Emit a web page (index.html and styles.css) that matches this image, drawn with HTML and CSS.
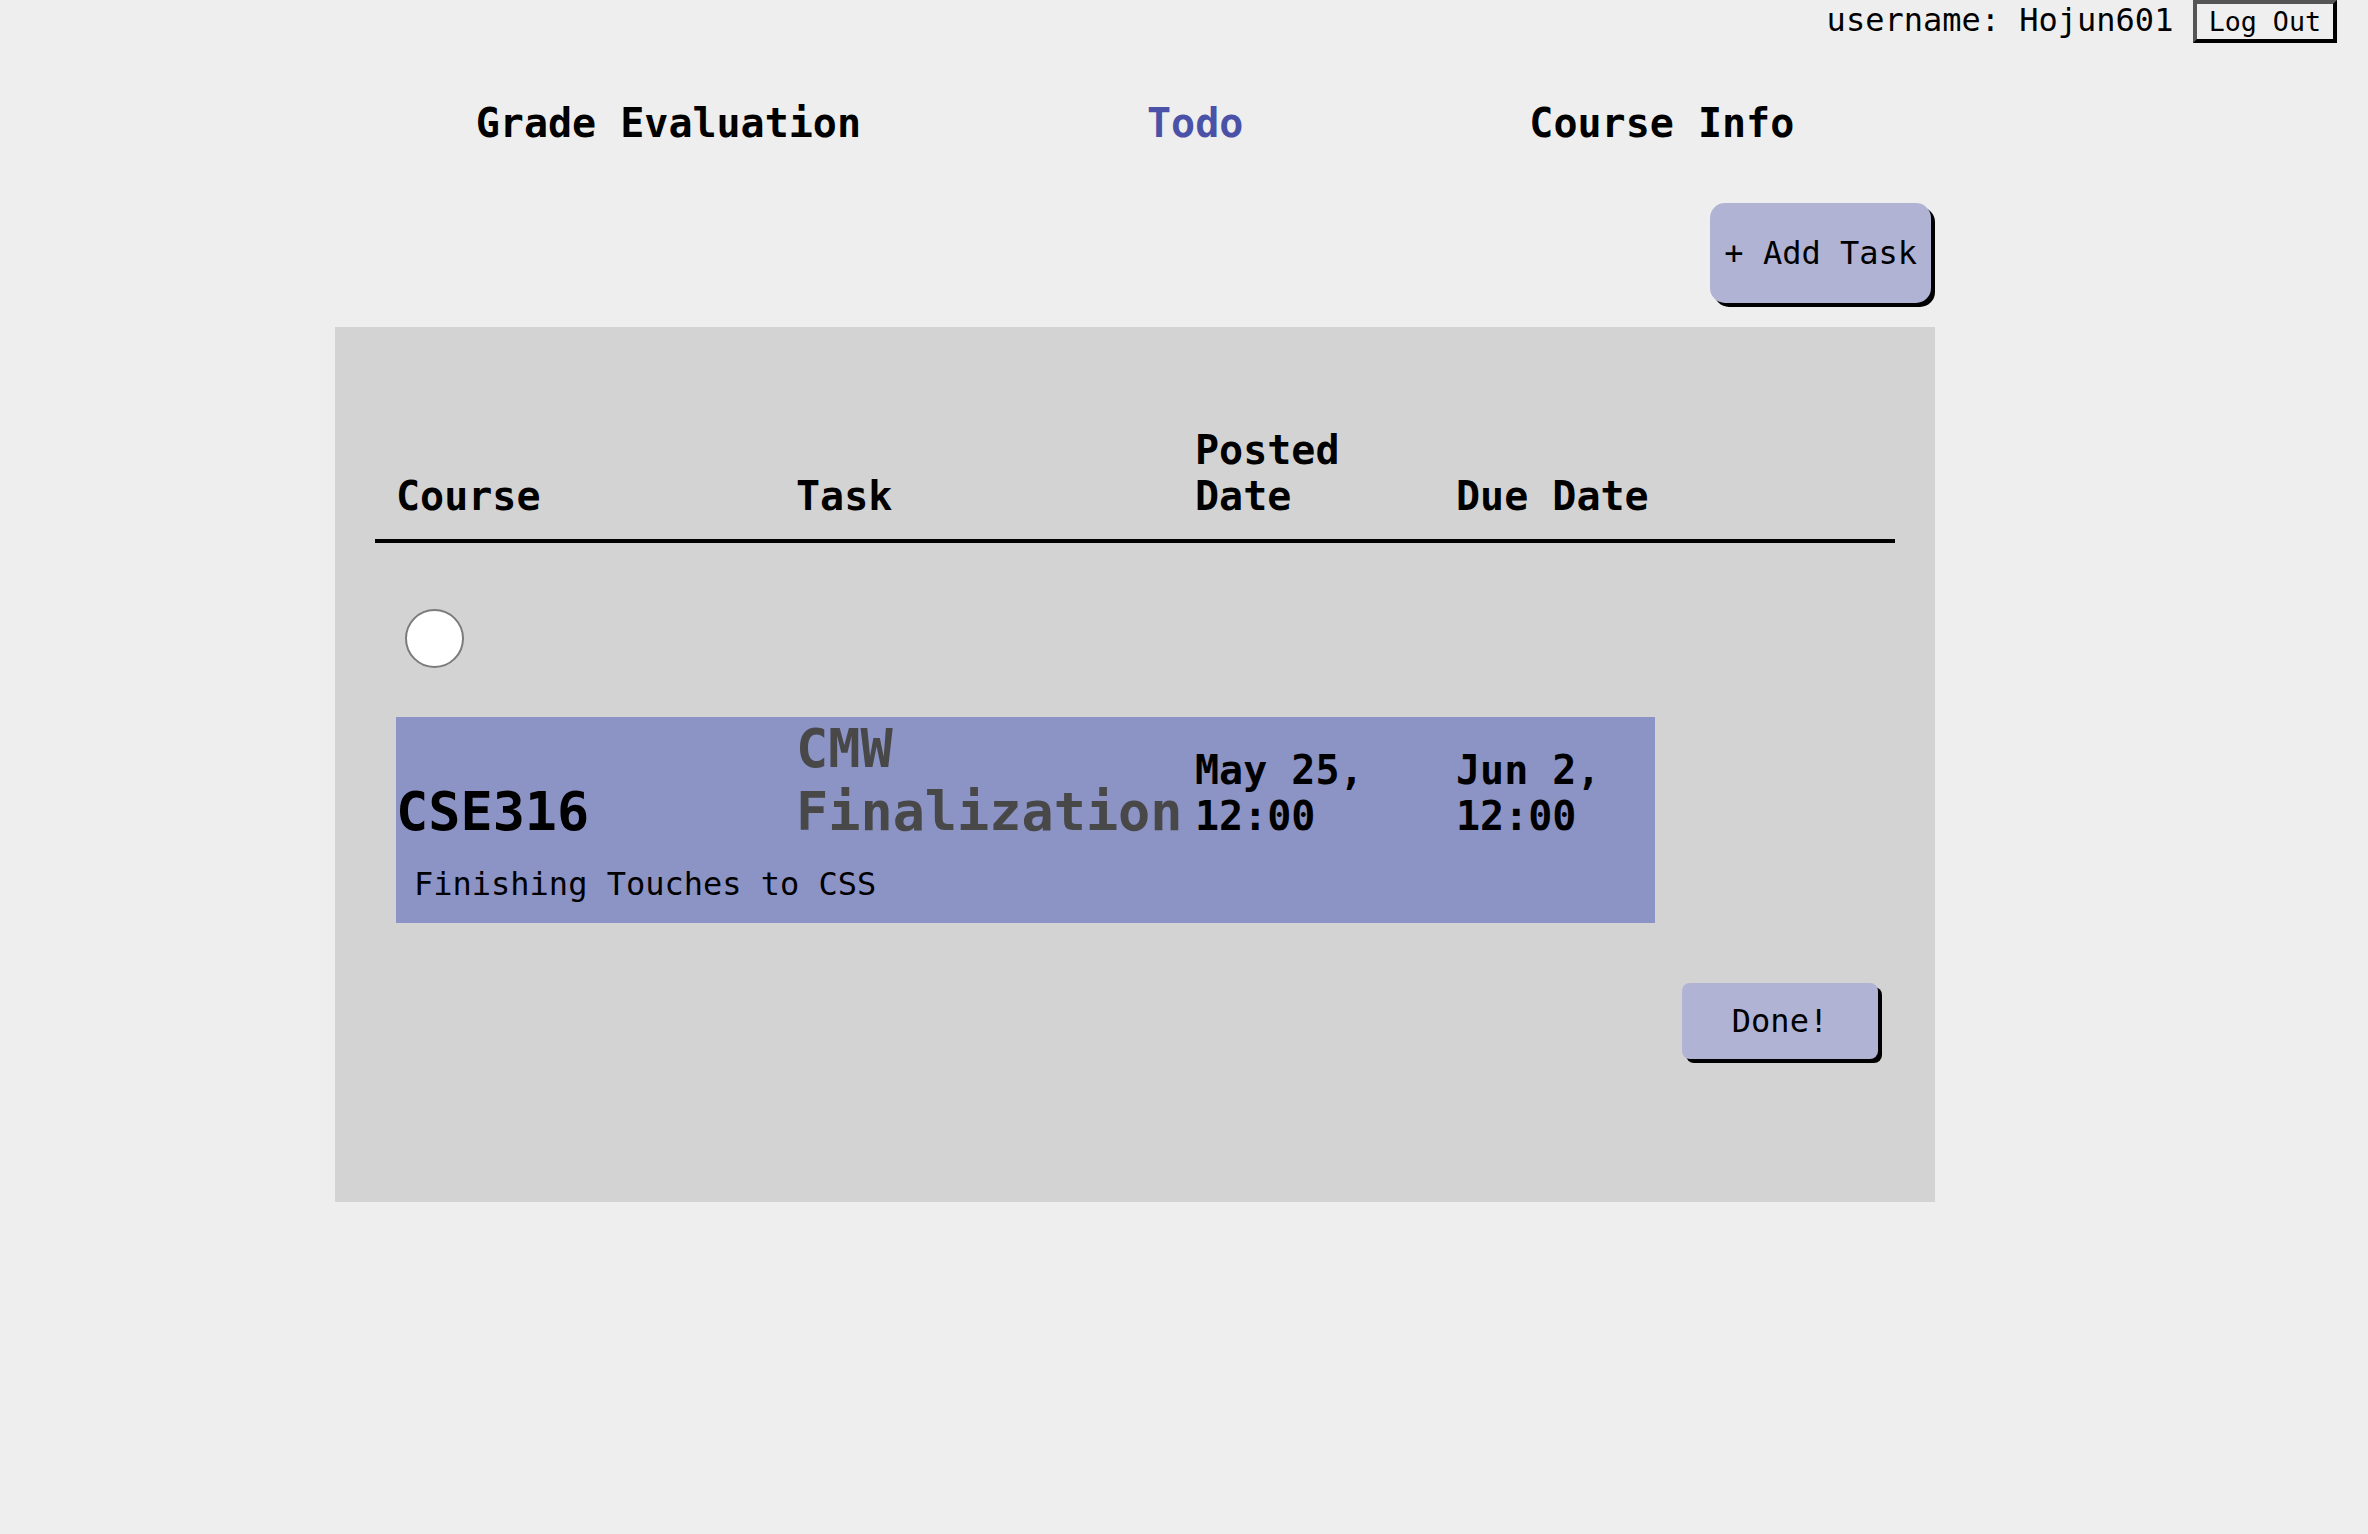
FILE: index.html
```html
<!DOCTYPE html>
<html lang="en">
<head>
<meta charset="utf-8">
<title>Todo</title>
<link rel="stylesheet" href="styles.css">
</head>
<body>
<header class="topbar"><span class="user">username: Hojun601</span> <button class="logout">Log Out</button></header>
<main class="page">
  <nav class="nav">
    <a class="nav-link">Grade Evaluation</a>
    <a class="nav-link active">Todo</a>
    <a class="nav-link">Course Info</a>
  </nav>
  <div class="toolbar"><button class="btn add">+ Add Task</button></div>
  <section class="panel">
    <div class="cols head">
      <div>Course</div>
      <div>Task</div>
      <div>Posted Date</div>
      <div>Due Date</div>
    </div>
    <div class="task">
      <input type="radio" class="check">
      <div class="card">
        <div class="cols row">
          <div class="course">CSE316</div>
          <div class="title">CMW Finalization</div>
          <div class="date">May 25, 12:00</div>
          <div class="date">Jun 2, 12:00</div>
        </div>
        <p class="desc">Finishing Touches to CSS</p>
      </div>
      <div class="actions"><button class="btn done">Done!</button></div>
    </div>
  </section>
</main>
</body>
</html>
```
FILE: styles.css
```css
* { box-sizing: border-box; }

html, body {
  margin: 0;
  background: #eeeeee;
  color: #000;
  font-family: "DejaVu Sans Mono", monospace;
}

.topbar {
  text-align: right;
  padding-right: 31px;
  font-size: 32px;
  line-height: normal;
}

.logout {
  font-family: "DejaVu Sans Mono", monospace;
  font-size: 26.67px;
  line-height: normal;
  padding: 2px 12px;
  margin: 0;
  background: #efefef;
  color: #000;
  border: 4px solid;
  border-color: #555 #000 #000 #555;
  border-radius: 0;
}

.page {
  width: 1600px;
  margin-left: 335px;
}

.nav {
  margin-top: 57px;
  display: flex;
  justify-content: center;
  gap: 286px;
  font-size: 40px;
  font-weight: bold;
  line-height: normal;
}

.nav-link { color: #000; }
.nav-link.active { color: #4a52a8; }

.toolbar {
  margin-top: 57px;
  display: flex;
  justify-content: flex-end;
  padding-right: 4px;
}

.btn {
  font-family: "DejaVu Sans Mono", monospace;
  font-size: 32px;
  color: #000;
  background: #b0b3d4;
  border: none;
  margin: 0;
  box-shadow: 4px 4px 0 #000;
}

.add {
  height: 100px;
  padding: 0 14px;
  border-radius: 15px;
}

.panel {
  margin-top: 24px;
  background: #d3d3d3;
  padding: 100px 40px 143px;
}

.cols {
  display: grid;
  grid-template-columns: 400px 399px 261px 199px;
}

.head {
  padding: 0 0 20px 21px;
  border-bottom: 4px solid #000;
  font-size: 40px;
  font-weight: bold;
  line-height: normal;
  align-items: end;
}

.task { padding-left: 21px; }

.check {
  display: block;
  appearance: none;
  -webkit-appearance: none;
  width: 59px;
  height: 59px;
  margin: 66px 0 0 9px;
  border: 2px solid #7b7b7b;
  border-radius: 50%;
  background: #fff;
}

.card {
  margin-top: 49px;
  width: 1259px;
  background: #8c93c5;
}

.row {
  align-items: last baseline;
  font-weight: bold;
  line-height: normal;
}

.course { font-size: 53.5px; color: #000; }
.title { font-size: 53.5px; color: #484848; }
.date { font-size: 40px; color: #000; }

.desc {
  margin: 0;
  padding: 22px 18px 20px;
  font-size: 32px;
  line-height: normal;
}

.actions {
  margin-top: 60px;
  display: flex;
  justify-content: flex-end;
  padding-right: 17px;
}

.done {
  width: 196px;
  height: 76px;
  padding: 0;
  border-radius: 8px;
}
```
